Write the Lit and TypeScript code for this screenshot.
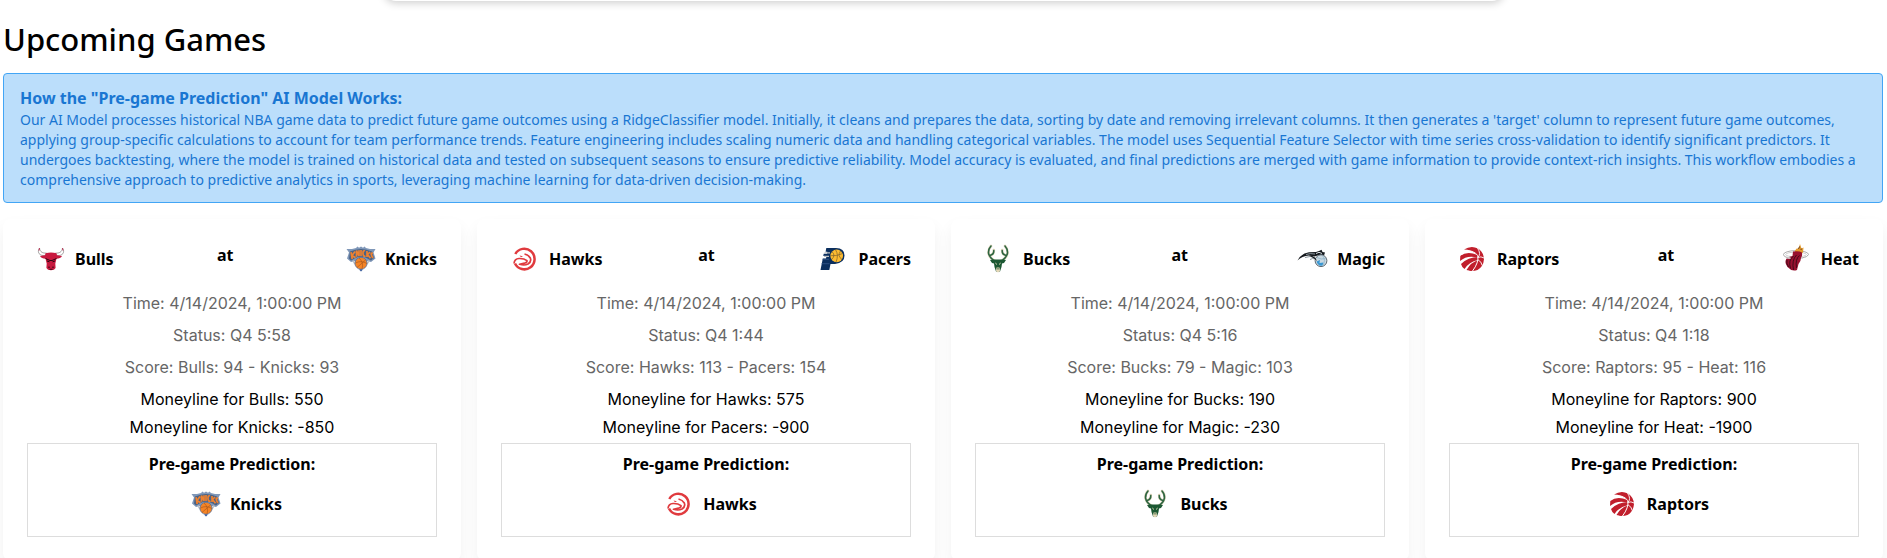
import { LitElement, html, svg, css, TemplateResult } from "lit";
import { customElement, property } from "lit/decorators.js";

type Team = "Bulls" | "Knicks" | "Hawks" | "Pacers" | "Bucks" | "Magic" | "Raptors" | "Heat";

interface Game {
  away: Team;
  home: Team;
  time: string;
  status: string;
  awayScore: number;
  homeScore: number;
  awayLine: number;
  homeLine: number;
  pick: Team;
}

const GAMES: Game[] = [
  { away: "Bulls", home: "Knicks", time: "4/14/2024, 1:00:00 PM", status: "Q4 5:58", awayScore: 94, homeScore: 93, awayLine: 550, homeLine: -850, pick: "Knicks" },
  { away: "Hawks", home: "Pacers", time: "4/14/2024, 1:00:00 PM", status: "Q4 1:44", awayScore: 113, homeScore: 154, awayLine: 575, homeLine: -900, pick: "Hawks" },
  { away: "Bucks", home: "Magic", time: "4/14/2024, 1:00:00 PM", status: "Q4 5:16", awayScore: 79, homeScore: 103, awayLine: 190, homeLine: -230, pick: "Bucks" },
  { away: "Raptors", home: "Heat", time: "4/14/2024, 1:00:00 PM", status: "Q4 1:18", awayScore: 95, homeScore: 116, awayLine: 900, homeLine: -1900, pick: "Raptors" },
];

const LOGOS: Record<Team, TemplateResult> = {
  Bulls: svg`
    <path d="M4.500 5C2.500 8 3 12 8 12.500L12 12.200 11.500 10C8 10.500 4.800 9 4.500 5Z" fill="#fff" stroke="#666" stroke-width=".6"/>
    <path d="M27.500 5C29.500 8 29 12 24 12.500L20 12.200 20.500 10C24 10.500 27.200 9 27.500 5Z" fill="#fff" stroke="#666" stroke-width=".6"/>
    <path d="M4.500 5.200 4 7.500M27.500 5.200 28 7.500" stroke="#ce1141" stroke-width=".8"/>
    <path d="M10.500 10.200Q16 8.800 21.500 10.200L22 12.300 27 13Q25.500 15.800 21.500 15.800L20.300 20.500 20.600 25Q19.500 27.300 16 27.300T11.400 25L11.700 20.500 10.500 15.800Q6.500 15.800 5 13L10 12.300Z" fill="#c8193f"/>
    <path d="M10.500 15.500 15 17.500H17L21.500 15.500M12 18 14.500 18.800M20 18 17.500 18.800" stroke="#2a0711" stroke-width="1" fill="none"/>
    <path d="M13 24.200h2M17 24.200h2M14.500 26.300h3" stroke="#2a0711" stroke-width=".8"/>`,
  Knicks: svg`
    <path d="M11 5 12.500 3.600 14 4.800 16 3.500 18 4.800 19.500 3.600 21 5 25 6 30.500 6 28.500 9.500 30.500 15.500 26 19 22 18 16 28.500 10 18 6 19 2 15.500 4 9.500 1.500 6 7 6Z" fill="#7f97b8"/>
    <path d="M4 15.500 6 17.500 10 15.200Q16 12.500 22 15.200L26 17.500 29 15 27 8.500Q16 3.500 5 8.500Z" fill="#4a6285"/>
    <path d="M6 9.200 7.200 16M10 8.500 7 12.500 10.500 14.700M11.500 13.700V7.600L14 13V7.200M16 7V13M20 8Q17.800 7 18 10.500T20.500 13M22 8V14M25 9 22.500 11.500 25.500 15.200M28 10.500Q25.800 9.500 26.300 11.500T28 15" stroke="#ee8130" stroke-width="1.700" fill="none"/>
    <path d="M8 17.500Q10 22 12 22.500M24 17.500Q22 22 20 22.500" stroke="#bec0c2" stroke-width="1.600" fill="none"/>
    <circle cx="16" cy="20.300" r="6" fill="#f58426" stroke="#5b719c" stroke-width=".8"/>
    <path d="M10.500 20Q16 17 22 20.500M14 15Q19 19.500 17 26M12 24.500Q16 21 20.500 17" stroke="#a3541b" stroke-width=".6" fill="none"/>
    <path d="M14 26.500 16 28.500 18 26.500" fill="#3f62a0"/>`,
  Hawks: svg`
    <path d="M6.300 11A10.300 10.300 0 1 1 6 20.500" fill="none" stroke="#e03a3e" stroke-width="2.500"/>
    <path d="M5 20.500Q4.800 15.200 7 12.800 9.500 10.500 13.500 11.500L19 13.200Q21.800 15.500 21.500 18.200 20.500 21 17.500 22L10.500 20.800 14.500 19.600Q17 18.800 16.500 17.800 14 16 9.500 16.300 6.300 17 5 20.500Z" fill="#fff"/>
    <path d="M5 20.500Q5.500 15.800 10 15.500 15 15.300 18 17.600 18.200 19.500 15.500 20.200L10.500 21.300Q15.500 22.800 19 21 22.800 18.500 21.300 15 19.500 12 15.500 11" fill="none" stroke="#e03a3e" stroke-width="1.700" stroke-linejoin="round"/>
    <path d="M10.500 12.500 14 13.200 12 14.300Z" fill="#e03a3e"/>`,
  Pacers: svg`
    <path d="M8.300 5H18Q26.500 5 26.500 12.500T17 21H12.500L11.300 27H2.500L4.800 15.500H8L8.500 13H5.300L5.700 10.800H9L9.300 8.800H7.600Z" fill="#0b2f5e"/>
    <path d="M3.600 20.700H11.500M4.600 16.300H11" stroke="#35588a" stroke-width=".8"/>
    <path d="M6.500 9.900H12M6 13.300H11" stroke="#bec0c2" stroke-width="1.200"/>
    <circle cx="18.700" cy="12.900" r="6.300" fill="#fdbb30"/>
    <path d="M12.500 12.700Q18 13.500 24.800 10.500M17.500 6.700Q21 12 18 19M22.500 8Q19 13 24 16.500M14 8.800Q18 12 13.700 16.500" stroke="#7b602d" stroke-width=".7" fill="none"/>`,
  Bucks: svg`
    <path d="M13 18.500Q6.500 15.500 5.500 10 5.200 6 8 3M7 12.500Q11 11.500 10.800 7M17 18.500Q23.500 15.500 24.500 10 24.800 6 22 3M23 12.500Q19 11.500 19.200 7" fill="none" stroke="#ddd3ba" stroke-width="2.600" stroke-linecap="round"/>
    <path d="M13 18.500Q6.500 15.500 5.500 10 5.200 6 8 3M7 12.500Q11 11.500 10.800 7.500M17 18.500Q23.500 15.500 24.500 10 24.800 6 22 3M23 12.500Q19 11.500 19.200 7.500" fill="none" stroke="#2c6541" stroke-width="1.500" stroke-linecap="round"/>
    <path d="M12 16.500H18L23 17 21 20 19 20.500 18.500 24 17 28.500H13L11.500 24 11 20.500 9 20 7 17Z" fill="#1c5833"/>
    <path d="M12.300 20 14 21.500M17.700 20 16 21.500" stroke="#eee1c6" stroke-width=".9"/>
    <path d="M13.500 24.500H16.500L17 28 15 29.500 13 28Z" fill="#e5d7b7"/>
    <path d="M14 25.500H16L15 26.800Z" fill="#00471b"/>`,
  Magic: svg`
    <path d="M.5 17.500Q4 10.500 12 9.200L19 9 22 8 24.500 6.800 25.500 9 28 9.500 27 12.500Q22 11.500 17.500 13.500L12 12.500Q5 13 .5 17.500Z" fill="#15191d"/>
    <path d="M9 11.500Q13 10 18 11M8 14.500Q13 12.500 18 14.500M13 16.500Q15.500 14.800 18.500 16" stroke="#8b969e" stroke-width="1" fill="none"/>
    <path d="M19 10.500 22 9.300 25 10.500" stroke="#d6dce0" stroke-width="1" fill="none"/>
    <circle cx="24" cy="17.700" r="5.900" fill="#c9d8e1" stroke="#5f6a72" stroke-width="1"/>
    <path d="M19.500 18.500 23 17 22.500 20 26.500 19.500 25.500 22.500Q21 23.500 19.500 18.500Z" fill="#3a98d3"/>
    <path d="M20 14.500Q24 17 29 15.500M25.500 12.500Q29 17 26 22.500" stroke="#8fb2c8" stroke-width=".8" fill="none"/>
    <path d="M12 12.500Q18 12.500 20 18L17 15.500Z" fill="#15191d"/>`,
  Raptors: svg`
    <path d="M7 6.500Q14 2 21 5.500 26.500 9 27 16 26.500 23.500 20.500 27 15 28.800 12 27.200L21.500 17.500 19.500 11.500Q14 6.500 7 6.500Z" fill="#c11f2c"/>
    <path d="M3.300 13Q10 7.500 20.500 12L20 14.500Q10 12 3 18Z" fill="#c11f2c"/>
    <path d="M4 21Q11 14 21.500 14L21 17Q12 19 7.500 26Q5 24.500 4 21Z" fill="#c11f2c"/>
    <path d="M9.500 27Q14 19 21.500 17L21 21Q17 23 14.500 28Z" fill="#c11f2c"/>
    <path d="M7.500 8Q16 6.500 20.800 12.500 22 19.500 15.500 28" fill="none" stroke="#fff" stroke-width="1"/>
    <path d="M20.500 5Q24.500 11 20.800 14.500M20.800 14.500Q24 13 27 15M21.200 17Q24.500 18.500 25.200 22.500" stroke="#fff" stroke-width=".9" fill="none"/>`,
  Heat: svg`
    <ellipse cx="15" cy="11.500" rx="12.500" ry="3.900" fill="none" stroke="#999" stroke-width=".8"/>
    <ellipse cx="15" cy="11.500" rx="10.300" ry="2.400" fill="none" stroke="#bbb" stroke-width=".7"/>
    <path d="M14 7.500 16 5.300 17.500 6 19 1 20.500 5.500 22.500 4.500 22 9.500 18 12 14 10Z" fill="#e39a2c"/>
    <path d="M17.500 6 18.500 3.500M20 7 20.300 5.500" stroke="#6a3b1a" stroke-width="1"/>
    <path d="M12 8.500Q18 7.500 21 9.500 21.500 13 20 15 20 18 17.500 21L16 27Q11 29 6.500 24 3 19.500 5.500 15.500 7.500 13.500 11.500 13Z" fill="#98102f"/>
    <path d="M12.500 13Q7 17 9.500 25.500M15.500 12Q10.500 17 12.500 27M18.500 12.500Q14 16 15.500 25M6 17Q5 20 7.500 24" stroke="#2c0713" stroke-width=".8" fill="none"/>
    <path d="M2.700 12.500Q5 15.200 9.500 15.300M21 15Q26.500 14 27.500 11.500" stroke="#fff" stroke-width="1.400" fill="none"/>
    <path d="M2.600 12.500Q5 15.200 9.500 15.300M21 15Q26.500 14 27.500 11.500" stroke="#777" stroke-width=".6" fill="none"/>`,
};

@customElement("team-badge")
export class TeamBadge extends LitElement {
  static styles = css`
    :host {
      display: flex;
      align-items: center;
      gap: 8px;
      padding-left: 8px;
      font-family: "Noto Sans", sans-serif;
      font-weight: 700;
      line-height: 24px;
    }
    .logo {
      display: block;
      width: 32px;
      height: 32px;
    }
  `;

  @property() team: Team = "Bulls";

  render() {
    return html`
      <svg class="logo" viewBox="0 0 32 32" aria-hidden="true">${LOGOS[this.team]}</svg>
      <span>${this.team}</span>
    `;
  }
}

@customElement("game-card")
export class GameCard extends LitElement {
  static styles = css`
    :host {
      display: block;
      padding: 24px;
      border-radius: 8px;
      background: #fff;
      box-shadow: 0 8px 16px rgba(0, 0, 0, 0.06);
      font-size: 16px;
      line-height: 24px;
      text-align: center;
    }
    .matchup {
      display: flex;
      justify-content: space-between;
      align-items: flex-start;
      margin-bottom: 16px;
    }
    .at {
      font-weight: 700;
    }
    p {
      margin: 0;
    }
    .details,
    .lines {
      font-family: Inter, sans-serif;
    }
    .details {
      display: grid;
      gap: 8px;
      margin-bottom: 8px;
      color: #666;
    }
    .lines {
      display: grid;
      gap: 4px;
      margin-bottom: 4px;
    }
    .prediction {
      display: flex;
      flex-direction: column;
      align-items: center;
      gap: 12px;
      padding: 8px 8px 16px;
      border: 1px solid #ddd;
    }
    h3 {
      margin: 0;
      font-size: 16px;
      font-weight: 700;
    }
  `;

  @property({ attribute: false }) game!: Game;

  render() {
    const g = this.game;
    return html`
      <div class="matchup">
        <team-badge .team=${g.away}></team-badge>
        <span class="at">at</span>
        <team-badge .team=${g.home}></team-badge>
      </div>
      <div class="details">
        <p>Time: ${g.time}</p>
        <p>Status: ${g.status}</p>
        <p>Score: ${g.away}: ${g.awayScore} - ${g.home}: ${g.homeScore}</p>
      </div>
      <div class="lines">
        <p>Moneyline for ${g.away}: ${g.awayLine}</p>
        <p>Moneyline for ${g.home}: ${g.homeLine}</p>
      </div>
      <section class="prediction">
        <h3>Pre-game Prediction:</h3>
        <team-badge .team=${g.pick}></team-badge>
      </section>
    `;
  }
}

@customElement("app-root")
export class AppRoot extends LitElement {
  static styles = css`
    :host {
      display: block;
      overflow: hidden;
      background: #fff;
      color: #000;
      font-family: "Noto Sans", sans-serif;
    }
    .panel {
      max-width: 1120px;
      height: 24px;
      margin: -23px auto 0;
      border-radius: 24px;
      background: #fff;
      box-shadow: 0 2px 8px rgba(0, 0, 0, 0.2);
    }
    main {
      padding: 18px 4px 24px 3px;
    }
    h1 {
      margin: 0 0 14px;
      font-size: 31px;
      font-weight: 500;
      line-height: 40px;
    }
    .info {
      margin-bottom: 16px;
      padding: 12px 16px;
      border: 1px solid #42a5f5;
      border-radius: 4px;
      background: #bbdefb;
      color: #1976d2;
      font-size: 14px;
      line-height: 20px;
    }
    .info h2 {
      margin: 0;
      font-size: 16px;
      font-weight: 700;
      line-height: 24px;
    }
    .info p {
      margin: 0;
    }
    .games {
      display: grid;
      grid-template-columns: repeat(4, minmax(0, 1fr));
      gap: 16px;
    }
    @media (max-width: 1200px) {
      .games {
        grid-template-columns: repeat(auto-fill, minmax(300px, 1fr));
      }
    }
  `;

  render() {
    return html`
      <div class="panel"></div>
      <main>
        <h1>Upcoming Games</h1>
        <section class="info">
          <h2>How the "Pre-game Prediction" AI Model Works:</h2>
          <p>
            Our AI Model processes historical NBA game data to predict future game outcomes using a RidgeClassifier
            model. Initially, it cleans and prepares the data, sorting by date and removing irrelevant columns. It then
            generates a 'target' column to represent future game outcomes, applying group-specific calculations to
            account for team performance trends. Feature engineering includes scaling numeric data and handling
            categorical variables. The model uses Sequential Feature Selector with time series cross-validation to
            identify significant predictors. It undergoes backtesting, where the model is trained on historical data and
            tested on subsequent seasons to ensure predictive reliability. Model accuracy is evaluated, and final
            predictions are merged with game information to provide context-rich insights. This workflow embodies a
            comprehensive approach to predictive analytics in sports, leveraging machine learning for data-driven
            decision-making.
          </p>
        </section>
        <div class="games">${GAMES.map((g) => html`<game-card .game=${g}></game-card>`)}</div>
      </main>
    `;
  }
}
